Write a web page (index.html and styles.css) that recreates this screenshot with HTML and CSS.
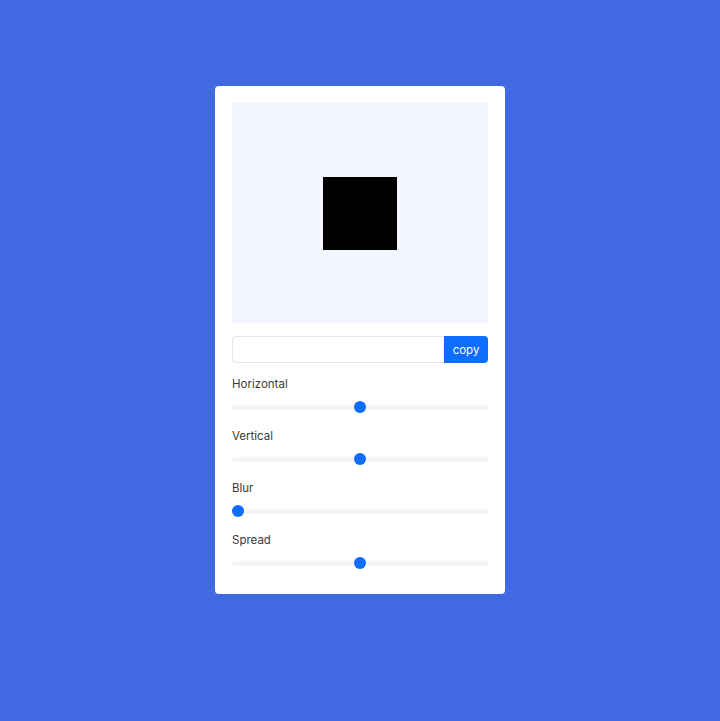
FILE: index.html
```html
<!DOCTYPE html>
<html lang="en">
<head>
  <meta charset="UTF-8" />
  <meta name="viewport" content="width=device-width, initial-scale=1.0"/>
  <title>Box Shadow Generator</title>
  <link rel="stylesheet" href="styles.css">
</head>
<body>
  <div class="card">
    <div class="preview">
      <div class="box" id="box"></div>
    </div>

    <div class="code-row">
      <input type="text" id="code" class="code" readonly />
      <button type="button" class="copy" onclick="copyCode()">copy</button>
    </div>

    <div class="control">
      <label for="horizontal">Horizontal</label>
      <input type="range" id="horizontal" min="-50" max="50" value="0" />
    </div>
    <div class="control">
      <label for="vertical">Vertical</label>
      <input type="range" id="vertical" min="-50" max="50" value="0" />
    </div>
    <div class="control">
      <label for="blur">Blur</label>
      <input type="range" id="blur" min="0" max="50" value="0" />
    </div>
    <div class="control">
      <label for="spread">Spread</label>
      <input type="range" id="spread" min="-50" max="50" value="0" />
    </div>
  </div>

  <script>
    function copyCode() {
      const code = document.getElementById("code");
      code.select();
    }
  </script>
</body>
</html>
```

FILE: styles.css
```css
body {
  font-family: Inter, "Noto Sans", sans-serif;
  background: #4169e1;
  color: #333;
  margin: 0;
  padding-top: 86px;
}
.card {
  width: 290px;
  box-sizing: border-box;
  margin: 0 auto;
  padding: 17px 17px 24px;
  background: #fff;
  border-radius: 4px;
}
.preview {
  height: 220px;
  background: #f3f6fe;
  display: flex;
  align-items: center;
  justify-content: center;
}
.box {
  width: 74px;
  height: 73px;
  background: #000;
}
.code-row {
  display: flex;
  margin-top: 13px;
  height: 27px;
}
.code {
  flex: 1;
  min-width: 0;
  box-sizing: border-box;
  height: 27px;
  margin: 0;
  border: 1px solid #e3e6ea;
  border-right: none;
  border-radius: 4px 0 0 4px;
  outline: none;
}
.copy {
  width: 44px;
  height: 27px;
  border: none;
  border-radius: 0 4px 4px 0;
  background: #0d6efd;
  color: #fff;
  font-family: Inter, "Noto Sans", sans-serif;
  font-size: 11.5px;
  padding: 0;
  cursor: pointer;
}
.control {
  margin-top: 13px;
  display: flex;
  flex-direction: column;
}
.control + .control {
  margin-top: 14px;
}
label {
  font-size: 11.5px;
  line-height: 16px;
  color: #3a3a3a;
}
input[type="range"] {
  -webkit-appearance: none;
  appearance: none;
  width: 100%;
  height: 14px;
  margin: 8px 0 0;
  background: transparent;
}
input[type="range"]::-webkit-slider-runnable-track {
  height: 5px;
  background: #f4f5f7;
  border-radius: 3px;
}
input[type="range"]::-webkit-slider-thumb {
  -webkit-appearance: none;
  appearance: none;
  width: 12px;
  height: 12px;
  margin-top: -3.5px;
  border-radius: 50%;
  background: #0d6efd;
  border: none;
}
```
